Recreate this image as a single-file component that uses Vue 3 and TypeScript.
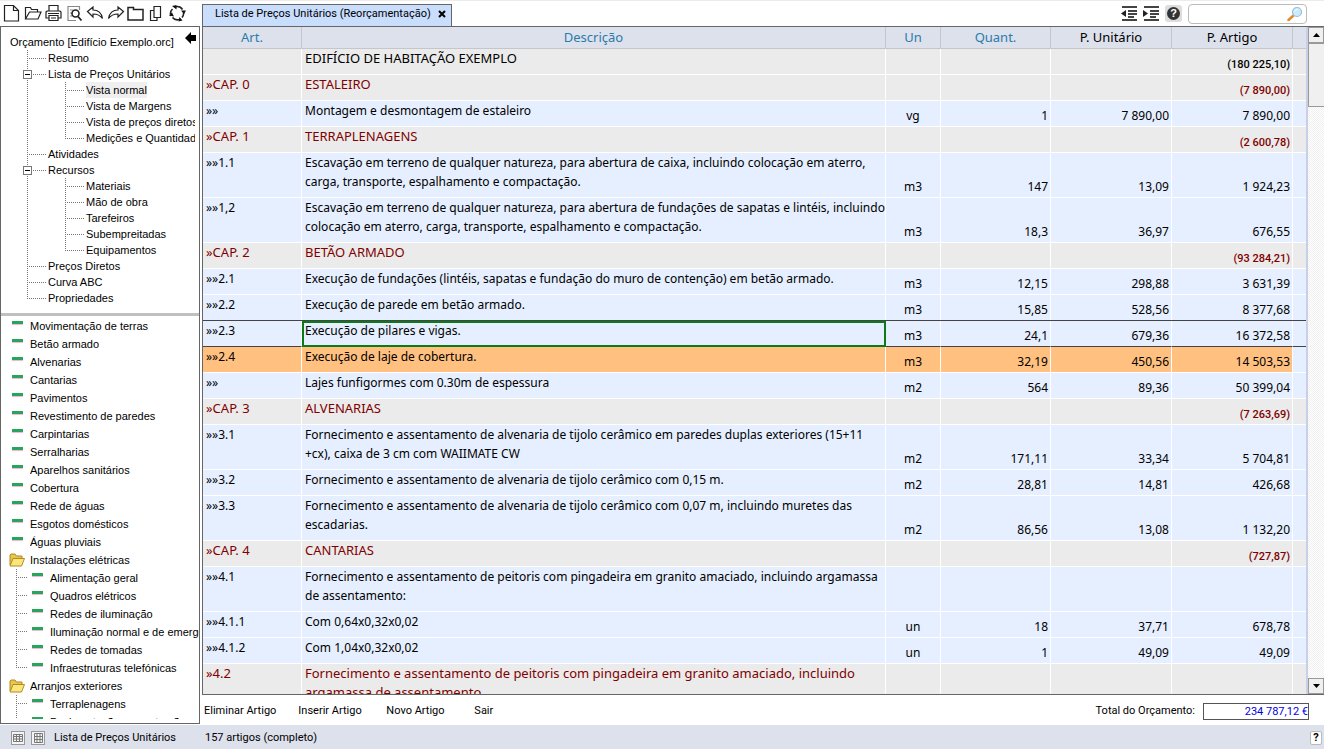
<script setup lang="ts">
import { ref } from 'vue'

interface TreeNode {
  label: string
  level: number
  last?: boolean
  open?: boolean
  selected?: boolean
}

interface LibraryNode {
  label: string
  kind: 'folder' | 'leaf'
  child?: boolean
  last?: boolean
}

interface Row {
  art: string
  desc: string
  un?: string
  qty?: string
  unit?: string
  total?: string
  kind: 'title' | 'chapter' | 'item'
  state?: 'current' | 'marked'
}

const tree: TreeNode[] = [
  { label: 'Resumo', level: 1 },
  { label: 'Lista de Preços Unitários', level: 1, open: true },
  { label: 'Vista normal', level: 2, selected: true },
  { label: 'Vista de Margens', level: 2 },
  { label: 'Vista de preços diretos', level: 2 },
  { label: 'Medições e Quantidades', level: 2, last: true },
  { label: 'Atividades', level: 1 },
  { label: 'Recursos', level: 1, open: true },
  { label: 'Materiais', level: 2 },
  { label: 'Mão de obra', level: 2 },
  { label: 'Tarefeiros', level: 2 },
  { label: 'Subempreitadas', level: 2 },
  { label: 'Equipamentos', level: 2, last: true },
  { label: 'Preços Diretos', level: 1 },
  { label: 'Curva ABC', level: 1 },
  { label: 'Propriedades', level: 1, last: true },
]

const library: LibraryNode[] = [
  { label: 'Movimentação de terras', kind: 'leaf' },
  { label: 'Betão armado', kind: 'leaf' },
  { label: 'Alvenarias', kind: 'leaf' },
  { label: 'Cantarias', kind: 'leaf' },
  { label: 'Pavimentos', kind: 'leaf' },
  { label: 'Revestimento de paredes', kind: 'leaf' },
  { label: 'Carpintarias', kind: 'leaf' },
  { label: 'Serralharias', kind: 'leaf' },
  { label: 'Aparelhos sanitários', kind: 'leaf' },
  { label: 'Cobertura', kind: 'leaf' },
  { label: 'Rede de águas', kind: 'leaf' },
  { label: 'Esgotos domésticos', kind: 'leaf' },
  { label: 'Águas pluviais', kind: 'leaf' },
  { label: 'Instalações elétricas', kind: 'folder' },
  { label: 'Alimentação geral', kind: 'leaf', child: true },
  { label: 'Quadros elétricos', kind: 'leaf', child: true },
  { label: 'Redes de iluminação', kind: 'leaf', child: true },
  { label: 'Iluminação normal e de emergência', kind: 'leaf', child: true },
  { label: 'Redes de tomadas', kind: 'leaf', child: true },
  { label: 'Infraestruturas telefónicas', kind: 'leaf', child: true, last: true },
  { label: 'Arranjos exteriores', kind: 'folder' },
  { label: 'Terraplenagens', kind: 'leaf', child: true },
  { label: 'Pavimentação e construção', kind: 'leaf', child: true },
]

const rows: Row[] = [
  { kind: 'title', art: '', desc: 'EDIFÍCIO DE HABITAÇÃO EXEMPLO', total: '(180 225,10)' },
  { kind: 'chapter', art: '»CAP. 0', desc: 'ESTALEIRO', total: '(7 890,00)' },
  { kind: 'item', art: '»»', desc: 'Montagem e desmontagem de estaleiro', un: 'vg', qty: '1', unit: '7 890,00', total: '7 890,00' },
  { kind: 'chapter', art: '»CAP. 1', desc: 'TERRAPLENAGENS', total: '(2 600,78)' },
  { kind: 'item', art: '»»1.1', desc: 'Escavação em terreno de qualquer natureza, para abertura de caixa, incluindo colocação em aterro,\ncarga, transporte, espalhamento e compactação.', un: 'm3', qty: '147', unit: '13,09', total: '1 924,23' },
  { kind: 'item', art: '»»1,2', desc: 'Escavação em terreno de qualquer natureza, para abertura de fundações de sapatas e lintéis, incluindo\ncolocação em aterro, carga, transporte, espalhamento e compactação.', un: 'm3', qty: '18,3', unit: '36,97', total: '676,55' },
  { kind: 'chapter', art: '»CAP. 2', desc: 'BETÃO ARMADO', total: '(93 284,21)' },
  { kind: 'item', art: '»»2.1', desc: 'Execução de fundações (lintéis, sapatas e fundação do muro de contenção) em betão armado.', un: 'm3', qty: '12,15', unit: '298,88', total: '3 631,39' },
  { kind: 'item', art: '»»2.2', desc: 'Execução de parede em betão armado.', un: 'm3', qty: '15,85', unit: '528,56', total: '8 377,68' },
  { kind: 'item', art: '»»2.3', desc: 'Execução de pilares e vigas.', un: 'm3', qty: '24,1', unit: '679,36', total: '16 372,58', state: 'current' },
  { kind: 'item', art: '»»2.4', desc: 'Execução de laje de cobertura.', un: 'm3', qty: '32,19', unit: '450,56', total: '14 503,53', state: 'marked' },
  { kind: 'item', art: '»»', desc: 'Lajes funfigormes com 0.30m de espessura', un: 'm2', qty: '564', unit: '89,36', total: '50 399,04' },
  { kind: 'chapter', art: '»CAP. 3', desc: 'ALVENARIAS', total: '(7 263,69)' },
  { kind: 'item', art: '»»3.1', desc: 'Fornecimento e assentamento de alvenaria de tijolo cerâmico em paredes duplas exteriores (15+11\n+cx), caixa de 3 cm com WAIIMATE CW', un: 'm2', qty: '171,11', unit: '33,34', total: '5 704,81' },
  { kind: 'item', art: '»»3.2', desc: 'Fornecimento e assentamento de alvenaria de tijolo cerâmico com 0,15 m.', un: 'm2', qty: '28,81', unit: '14,81', total: '426,68' },
  { kind: 'item', art: '»»3.3', desc: 'Fornecimento e assentamento de alvenaria de tijolo cerâmico com 0,07 m, incluindo muretes das\nescadarias.', un: 'm2', qty: '86,56', unit: '13,08', total: '1 132,20' },
  { kind: 'chapter', art: '»CAP. 4', desc: 'CANTARIAS', total: '(727,87)' },
  { kind: 'item', art: '»»4.1', desc: 'Fornecimento e assentamento de peitoris com pingadeira em granito amaciado, incluindo argamassa\nde assentamento:' },
  { kind: 'item', art: '»»4.1.1', desc: 'Com 0,64x0,32x0,02', un: 'un', qty: '18', unit: '37,71', total: '678,78' },
  { kind: 'item', art: '»»4.1.2', desc: 'Com 1,04x0,32x0,02', un: 'un', qty: '1', unit: '49,09', total: '49,09' },
  { kind: 'chapter', art: '»4.2', desc: 'Fornecimento e assentamento de peitoris com pingadeira em granito amaciado, incluindo\nargamassa de assentamento.' },
]

const actions = ['Eliminar Artigo', 'Inserir Artigo', 'Novo Artigo', 'Sair']
const search = ref('')
const total = ref('234 787,12 €')
</script>

<template>
  <div class="app">
    <header class="top">
      <div class="tools">
        <button class="tool" aria-label="Novo"><svg viewBox="0 0 20 20"><path d="M3.500 2.500h9l5 5v10.500h-14z M12.500 2.500v5h5" /></svg></button>
        <button class="tool" aria-label="Abrir"><svg viewBox="0 0 20 20"><path d="M3.500 16V4.500h5l1 2h6v2.500M3.500 16l4-7h11.500l-3 7z" /></svg></button>
        <button class="tool" aria-label="Imprimir"><svg viewBox="0 0 20 20"><path d="M6 8V2.500h9V8M4 8h13l1 1v6h-3M6 15H3V9l1-1M6 12.500h9v5H6zM5 10.500h11M8 15h5" /></svg></button>
        <button class="tool" aria-label="Pré-visualizar"><svg viewBox="0 0 20 20"><path d="M15.500 7V3.500H4v14h8M6 7h3M6 10h2M6 13h2" stroke="#888" /><circle cx="11.500" cy="10.500" r="3.500" stroke-width="1.600" /><path d="M14 13.500l3.500 4" stroke-width="1.800" /></svg></button>
        <button class="tool" aria-label="Anular"><svg viewBox="0 0 20 20"><path d="M2.500 8.500L8 4v3c5 0 8.500 3 9.500 8.500C15 12 12 11 8 11v3z" /></svg></button>
        <button class="tool" aria-label="Refazer"><svg viewBox="0 0 20 20"><path d="M17.500 8.500L12 4v3c-5 0-8.500 3-9.500 8.500C5 12 8 11 12 11v3z" /></svg></button>
        <button class="tool" aria-label="Pasta"><svg viewBox="0 0 20 20"><path d="M1 7V4.500h5.500v2h9.500V17H1z" stroke-width="1.500" /></svg></button>
        <button class="tool" aria-label="Copiar"><svg viewBox="0 0 20 20"><path d="M6 3.500h6.500v11H6zM6 7.500H2.500v10H9v-3" stroke-width="1.200" /></svg></button>
        <button class="tool" aria-label="Atualizar"><svg viewBox="0 0 20 20"><path d="M2 13A6.500 6.500 0 0 1 3.500 6M6 4A6.500 6.500 0 0 1 13.500 6.500M14.500 9A6.500 6.500 0 0 1 13 14.500M10.500 16.500A6.500 6.500 0 0 1 3.500 14.500" stroke-width="1.600" /><path d="M3 3l4.500-1v4.500zM17 7.500l-5 0 3 3.500zM13.500 17.500l-4 1 1-4.500zM0 12.500l3-3 2 4z" fill="#111" stroke="none" /></svg></button>
      </div>
      <div class="tabs">
        <div class="tab">
          <span>Lista de Preços Unitários (Reorçamentação)</span>
          <button class="close" aria-label="Fechar"><svg viewBox="0 0 8 8"><path d="M1 1l6 6M7 1L1 7" /></svg></button>
        </div>
        <div class="right-tools">
          <button class="indent" aria-label="Diminuir nível"><svg viewBox="0 0 16 15"><path d="M1 1h15M7 5h9M7 8h9M7 11h6M1 14h15" /><path class="solid" d="M5 4v7L0 7.500z" /></svg></button>
          <button class="indent" aria-label="Aumentar nível"><svg viewBox="0 0 16 15"><path d="M1 1h15M7 5h9M7 8h9M7 11h6M1 14h15" /><path class="solid" d="M0 4v7l5-3.500z" /></svg></button>
          <button class="help" aria-label="Ajuda"><span>?</span></button>
          <div class="search">
            <input v-model="search" type="text" aria-label="Procurar" />
            <svg viewBox="0 0 16 16"><path d="M1.500 14l5-4.500" stroke="#e58a2c" stroke-width="2.500" stroke-linecap="round" /><circle cx="10" cy="6" r="4.500" fill="#c8ecfb" stroke="#9bbddb" stroke-width="1.200" /><path d="M7.500 5.500a3 3 0 0 1 3-2" stroke="#fff" fill="none" /></svg>
          </div>
        </div>
      </div>
    </header>

    <div class="body">
      <aside class="side">
        <nav class="tree" aria-label="Orçamento">
          <div class="tree-root">
            <span>Orçamento [Edifício Exemplo.orc]</span>
            <button class="collapse" aria-label="Recolher painel"><svg viewBox="0 0 12 12"><path d="M0 6l6-6v3h5v6H6v3z" /></svg></button>
          </div>
          <div v-for="n in tree" :key="n.label" class="node">
            <span v-if="n.level === 2" class="guide pass"></span>
            <span class="guide" :class="{ last: n.last }">
              <button v-if="n.open" class="toggle" :aria-label="n.label"></button>
            </span>
            <span class="label" :class="{ selected: n.selected }">{{ n.label }}</span>
          </div>
        </nav>
        <div class="library">
          <div v-for="n in library" :key="n.label" class="entry">
            <span v-if="n.child" class="guide" :class="{ last: n.last }"></span>
            <svg v-if="n.kind === 'folder'" class="folder" viewBox="0 0 16 14">
              <path d="M1 12V2l1-1h4l1.500 2H13v2.500" fill="#e6c552" stroke="#b48a1c" />
              <path d="M1 13l3-7.500h11.500L12.500 13z" fill="#fae67e" stroke="#b48a1c" />
            </svg>
            <i v-else class="dash"></i>
            <span class="label">{{ n.label }}</span>
          </div>
        </div>
      </aside>

      <main class="main">
        <div class="sheet">
          <div class="viewport">
            <table>
              <colgroup>
                <col class="c-art" /><col /><col class="c-un" /><col class="c-qty" /><col class="c-price" /><col class="c-price" /><col class="c-end" />
              </colgroup>
              <thead>
                <tr>
                  <th>Art.</th><th>Descrição</th><th>Un</th><th>Quant.</th>
                  <th class="dark">P. Unitário</th><th class="dark">P. Artigo</th><th></th>
                </tr>
              </thead>
              <tbody>
                <tr v-for="(r, i) in rows" :key="i" :class="[r.kind, r.state]">
                  <td class="art">{{ r.art }}</td>
                  <td class="desc">{{ r.desc }}</td>
                  <td class="un">{{ r.un }}</td>
                  <td class="num">{{ r.qty }}</td>
                  <td class="num">{{ r.unit }}</td>
                  <td class="num">{{ r.total }}</td>
                  <td class="end"></td>
                </tr>
              </tbody>
            </table>
          </div>
          <div class="scroll">
            <button class="arrow" aria-label="Subir"><svg viewBox="0 0 7 4"><path d="M0 4L3.500 0L7 4z" /></svg></button>
            <div class="thumb"></div>
            <div class="track"></div>
            <button class="arrow" aria-label="Descer"><svg viewBox="0 0 7 4"><path d="M0 0L3.500 4L7 0z" /></svg></button>
          </div>
        </div>
        <div class="actions">
          <button v-for="a in actions" :key="a">{{ a }}</button>
          <label class="total">Total do Orçamento: <input v-model="total" type="text" readonly /></label>
        </div>
      </main>
    </div>

    <footer class="status">
      <button class="grid-btn" aria-label="Vista em linhas"><svg viewBox="0 0 12 12"><path d="M1.500 2.500h9v7h-9zM1.500 4.500h9M1.500 7h9M4.500 2.500v7M7.500 2.500v7" /></svg></button>
      <button class="grid-btn" aria-label="Vista em colunas"><svg viewBox="0 0 12 12"><path d="M2.500 1.500h8v9h-8zM2.500 4.500h8M2.500 7.500h8M5 1.500v9M8 1.500v9" /></svg></button>
      <span class="view">Lista de Preços Unitários</span>
      <span>157 artigos (completo)</span>
      <button class="tip" aria-label="Ajuda">?</button>
    </footer>
  </div>
</template>

<style>
html,
body {
  margin: 0;
  overflow: hidden;
}
</style>

<style scoped>
.app {
  display: flex;
  flex-direction: column;
  height: 100vh;
  background: #fff;
  color: #000;
  font: 11px/16px 'Liberation Sans', Arial, sans-serif;
}
.app *,
.app *::before {
  box-sizing: border-box;
}
button {
  padding: 0;
  border: 0;
  background: none;
  color: inherit;
  font: inherit;
}
svg {
  display: block;
  fill: none;
}

/* toolbar */
.top {
  display: flex;
  height: 26px;
  flex: none;
  border-top: 1px solid #ececec;
}
.tools {
  display: flex;
  width: 202px;
  flex: none;
  padding: 2px 0 0 1px;
}
.tool {
  width: 21px;
  height: 20px;
}
.tool svg {
  width: 20px;
  height: 20px;
  stroke: #222;
  stroke-width: 1.2;
}
.tabs {
  display: flex;
  flex: 1;
  justify-content: space-between;
}
.tab {
  display: flex;
  align-items: center;
  justify-content: space-between;
  width: 250px;
  margin-top: 3px;
  padding: 0 5px 3px 12px;
  border: 1px solid #666;
  border-bottom: 0;
  background: #c9ddfd;
  font-family: Roboto, sans-serif;
}
.close {
  width: 8px;
  height: 8px;
}
.close svg {
  width: 8px;
  height: 8px;
  stroke: #000;
  stroke-width: 2;
}
.right-tools {
  display: flex;
  align-items: center;
  gap: 6px;
  padding-right: 17px;
}
.indent svg {
  width: 16px;
  height: 15px;
  stroke: #444;
  stroke-width: 1.8;
}
.indent .solid {
  fill: #222;
  stroke: none;
}
.help {
  display: grid;
  place-items: center;
  width: 17px;
  height: 17px;
  border-radius: 3px;
  background: #ddd;
}
.help span {
  width: 13px;
  height: 13px;
  border-radius: 50%;
  background: #333;
  color: #fff;
  font-weight: 700;
  line-height: 13px;
}
.search {
  display: flex;
  align-items: center;
  width: 119px;
  height: 20px;
  padding-right: 3px;
  border: 1px solid #bbb;
  border-radius: 4px;
}
.search input {
  flex: 1;
  min-width: 0;
  border: 0;
  outline: 0;
  background: none;
}
.search svg {
  width: 16px;
  height: 16px;
}

/* left panel */
.body {
  display: flex;
  flex: 1;
  min-height: 0;
}
.side {
  display: flex;
  flex-direction: column;
  width: 200px;
  flex: none;
  margin-bottom: 1px;
  border: 1px solid #666;
  overflow: hidden;
  white-space: nowrap;
}
.tree {
  padding: 7px 0;
}
.tree-root {
  display: flex;
  justify-content: space-between;
  height: 16px;
  padding: 0 2px 0 9px;
}
.collapse {
  display: flex;
  margin-top: -2px;
}
.collapse svg {
  width: 12px;
  height: 12px;
  fill: #000;
}
.node {
  display: flex;
  height: 16px;
  margin-right: 4px;
  padding-left: 26px;
  overflow: hidden;
}
.guide {
  display: flex;
  align-items: center;
  width: 21px;
  flex: none;
  background:
    repeating-linear-gradient(#777 0 1px, #fff 1px 2px) 0 0 / 1px 100% no-repeat,
    repeating-linear-gradient(90deg, #777 0 1px, #fff 1px 2px) 0 8px / 19px 1px no-repeat;
}
.guide.last {
  background-size: 1px 8px, 19px 1px;
}
.guide.pass {
  width: 38px;
  background-size: 1px 100%, 0 0;
}
.toggle {
  width: 9px;
  height: 9px;
  flex: none;
  margin-left: -4px;
  border: 1px solid #777;
  background: linear-gradient(#000, #000) center / 5px 1px no-repeat #fff;
}
.selected {
  background: #efefef;
}
.library {
  flex: 1;
  min-height: 0;
  margin-bottom: 4px;
  padding-top: 1px;
  border-top: 3px solid #c0c0c0;
  overflow: hidden;
}
.entry {
  display: flex;
  height: 18px;
  line-height: 18px;
}
.entry .guide {
  width: 15px;
  margin-left: 15px;
  background-size: 1px 100%, 11px 1px;
}
.entry .guide.last {
  background-size: 1px 9px, 11px 1px;
}
.dash {
  width: 11px;
  height: 4px;
  flex: none;
  margin: 4px 7px 0 11px;
  border-bottom: 1px solid #f3b6d3;
  background: #28a45c;
}
.guide + .dash {
  margin-left: 1px;
}
.folder {
  width: 16px;
  height: 14px;
  margin: 2px 5px 0 8px;
}

/* sheet */
.main {
  display: flex;
  flex-direction: column;
  flex: 1;
  min-width: 0;
  margin-left: 2px;
}
.sheet {
  display: flex;
  flex: 1;
  min-height: 0;
  border: solid #666;
  border-width: 1px 0 1px 1px;
}
.viewport {
  flex: 1;
  min-width: 0;
  border-right: 2px solid #c8d0e8;
  background: #ebebeb;
  overflow: hidden;
}
table {
  width: 100%;
  border-collapse: separate;
  border-spacing: 0;
  table-layout: fixed;
  font: 12px/19px 'Noto Sans', 'Open Sans', sans-serif;
}
.c-art {
  width: 99px;
}
.c-un {
  width: 55px;
}
.c-qty {
  width: 110px;
}
.c-price {
  width: 121px;
}
.c-end {
  width: 13px;
}
th {
  height: 22px;
  padding: 0 0 1px;
  border: solid #c4c6cc;
  border-width: 0 1px 1px 0;
  background: #dde1ec;
  color: #2b7bab;
  font-size: 13px;
  font-weight: 400;
}
th.dark {
  color: #000;
}
td {
  padding: 0 0 6px 3px;
  border: solid #fff;
  border-width: 0 1px 1px 0;
  background: #e5efff;
  vertical-align: top;
}
th:last-child,
td:last-child {
  border-right: 0;
}
.desc {
  white-space: pre-line;
}
.un,
.num {
  padding: 5px 2px 1px;
  vertical-align: bottom;
}
.un {
  text-align: center;
}
.num {
  text-align: right;
  white-space: nowrap;
}
.title td,
.chapter td {
  background: #ebebeb;
}
.title .desc,
.chapter .desc,
.chapter .art {
  font-size: 13px;
}
.chapter td {
  color: #800000;
}
.title .num,
.chapter .num {
  padding: 6px 2px 0;
  font-family: Roboto, sans-serif;
  font-size: 11px;
  font-weight: 500;
}
.marked td:not(.end) {
  background: #ffc080;
}
.current td {
  border-bottom-color: #444;
  box-shadow: 0 -1px #444;
}
.current .desc {
  outline: 2px solid #0b7a17;
  outline-offset: -2px;
}

/* scrollbar */
.scroll {
  display: flex;
  flex-direction: column;
  width: 16px;
  flex: none;
}
.arrow {
  display: grid;
  place-items: center;
  height: 16px;
  border: 1px solid #999;
  background: #f0f0f0;
}
.arrow svg {
  width: 7px;
  height: 4px;
  fill: #000;
}
.thumb {
  height: 64px;
  border: 1px solid #999;
  border-right: 0;
  background: #f0f0f0;
}
.track {
  flex: 1;
  background: repeating-conic-gradient(#f0f0f0 0 25%, #fff 0 50%) 0 0 / 2px 2px;
}

/* actions */
.actions {
  display: flex;
  align-items: center;
  gap: 22px;
  height: 30px;
  flex: none;
  padding: 2px 15px 0 2px;
  font-family: Roboto, sans-serif;
}
.actions button {
  min-width: 66px;
  text-align: left;
}
.total {
  display: flex;
  align-items: center;
  gap: 8px;
  margin-left: auto;
}
.total input {
  width: 106px;
  height: 17px;
  padding: 0;
  border: 1px solid #555;
  outline: 0;
  color: #0000e0;
  font: inherit;
  text-align: right;
}

/* status bar */
.status {
  display: flex;
  align-items: center;
  height: 24px;
  flex: none;
  padding: 1px 2px 0 11px;
  background: #dde1ec;
  font-family: Roboto, sans-serif;
}
.grid-btn {
  width: 14px;
  height: 14px;
  margin-right: 6px;
  border: 1px solid #999;
  background: #f4f4f4;
}
.grid-btn svg {
  width: 12px;
  height: 12px;
  stroke: #777;
}
.view {
  width: 154px;
  padding-left: 3px;
}
.tip {
  width: 12px;
  height: 14px;
  margin-left: auto;
  border: 1px solid #bbb;
  border-radius: 2px;
  background: #fff;
  font-weight: 700;
  line-height: 12px;
}
</style>
